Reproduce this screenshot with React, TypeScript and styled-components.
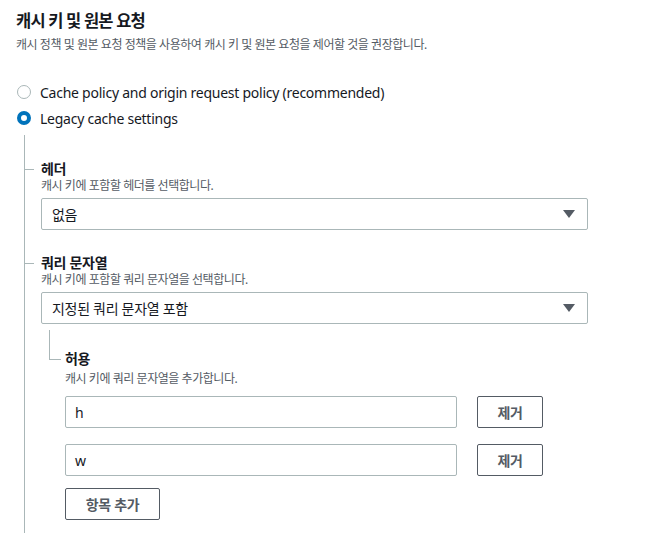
import React from "react";
import styled, { createGlobalStyle } from "styled-components";

const Global = createGlobalStyle`
  html, body { margin: 0; padding: 0; background: #ffffff; }
  body {
    font-family: "Noto Sans", "Noto Sans CJK KR", sans-serif;
    color: #16191f;
    -webkit-font-smoothing: antialiased;
  }
  * { box-sizing: border-box; }
`;

const Page = styled.div`
  width: 646px;
  height: 533px;
  overflow: hidden;
  padding: 10px 0 0 16px;
  display: flex;
  flex-direction: column;
`;

const Title = styled.h2`
  margin: 0;
  font-size: 16.5px;
  line-height: 22px;
  font-weight: 700;
  letter-spacing: -0.8px;
  color: #16191f;
`;

const Description = styled.div<{ $mt?: number }>`
  margin-top: ${(p) => p.$mt ?? 1}px;
  font-size: 12px;
  line-height: 16px;
  letter-spacing: -0.45px;
  color: #545b64;
`;

const RadioGroup = styled.div`
  margin-top: 29px;
  display: flex;
  flex-direction: column;
  gap: 6px;
`;

const RadioRow = styled.label`
  display: flex;
  align-items: center;
  gap: 9px;
  height: 20px;
  font-size: 14px;
  letter-spacing: -0.25px;
  color: #16191f;
`;

const RadioDot = styled.span<{ $checked?: boolean }>`
  width: 14px;
  height: 14px;
  margin-left: 1px;
  border-radius: 50%;
  flex: none;
  background: #fff;
  border: ${(p) => (p.$checked ? "4px solid #0073bb" : "1px solid #aab7b8")};
`;

const Tree = styled.div`
  margin-top: 7px;
  margin-left: 8px;
  border-left: 1px solid #aab7b8;
  padding: 26px 0 0 16px;
  display: flex;
  flex-direction: column;
  flex: 1;
`;

const Field = styled.div<{ $mt?: number }>`
  position: relative;
  margin-top: ${(p) => p.$mt ?? 0}px;
  display: flex;
  flex-direction: column;
  &::before {
    content: "";
    position: absolute;
    left: -16px;
    top: 8px;
    width: 9px;
    border-top: 1px solid #aab7b8;
  }
`;

const Label = styled.div`
  font-size: 14px;
  line-height: 16px;
  font-weight: 700;
  letter-spacing: -0.3px;
  color: #16191f;
`;

const Select = styled.div`
  margin-top: 4px;
  width: 547px;
  height: 32px;
  border: 1px solid #aab7b8;
  border-radius: 2px;
  display: flex;
  align-items: center;
  justify-content: space-between;
  padding: 0 10px 0 10px;
  font-size: 14px;
  letter-spacing: -0.3px;
  color: #16191f;
`;

const Caret = styled.span`
  width: 0;
  height: 0;
  border-left: 6px solid transparent;
  border-right: 6px solid transparent;
  border-top: 8px solid #545b64;
  margin-right: 2px;
`;

const Nested = styled.div`
  position: relative;
  margin-top: 6px;
  padding: 21px 0 0 24px;
  display: flex;
  flex-direction: column;
  &::before {
    content: "";
    position: absolute;
    left: 8px;
    top: 0;
    width: 11px;
    height: 29px;
    border-left: 1px solid #aab7b8;
    border-bottom: 1px solid #aab7b8;
  }
`;

const Row = styled.div<{ $mt?: number }>`
  margin-top: ${(p) => p.$mt ?? 0}px;
  display: flex;
  align-items: center;
  gap: 20px;
`;

const Input = styled.div`
  width: 392px;
  height: 32px;
  border: 1px solid #aab7b8;
  border-radius: 2px;
  display: flex;
  align-items: center;
  padding: 0 9px;
  font-size: 14px;
  color: #16191f;
`;

const Button = styled.button<{ $w: number }>`
  width: ${(p) => p.$w}px;
  height: 32px;
  background: #fff;
  border: 1px solid #545b64;
  border-radius: 2px;
  font-family: "Noto Sans", "Noto Sans CJK KR", sans-serif;
  font-size: 14px;
  font-weight: 700;
  letter-spacing: -0.3px;
  color: #545b64;
  padding: 0;
  display: flex;
  align-items: center;
  justify-content: center;
`;

export default function App() {
  return (
    <>
      <Global />
      <Page>
        <Title>캐시 키 및 원본 요청</Title>
        <Description $mt={5}>
          캐시 정책 및 원본 요청 정책을 사용하여 캐시 키 및 원본 요청을 제어할 것을 권장합니다.
        </Description>
        <RadioGroup>
          <RadioRow>
            <RadioDot />
            Cache policy and origin request policy (recommended)
          </RadioRow>
          <RadioRow>
            <RadioDot $checked />
            Legacy cache settings
          </RadioRow>
        </RadioGroup>
        <Tree>
          <Field>
            <Label>헤더</Label>
            <Description>캐시 키에 포함할 헤더를 선택합니다.</Description>
            <Select>
              <span>없음</span>
              <Caret />
            </Select>
          </Field>
          <Field $mt={25}>
            <Label>쿼리 문자열</Label>
            <Description>캐시 키에 포함할 쿼리 문자열을 선택합니다.</Description>
            <Select>
              <span>지정된 쿼리 문자열 포함</span>
              <Caret />
            </Select>
          </Field>
          <Nested>
            <Label>허용</Label>
            <Description $mt={4}>캐시 키에 쿼리 문자열을 추가합니다.</Description>
            <Row $mt={9}>
              <Input>h</Input>
              <Button $w={66}>제거</Button>
            </Row>
            <Row $mt={16}>
              <Input>w</Input>
              <Button $w={66}>제거</Button>
            </Row>
            <Row $mt={12}>
              <Button $w={95}>항목 추가</Button>
            </Row>
          </Nested>
        </Tree>
      </Page>
    </>
  );
}
